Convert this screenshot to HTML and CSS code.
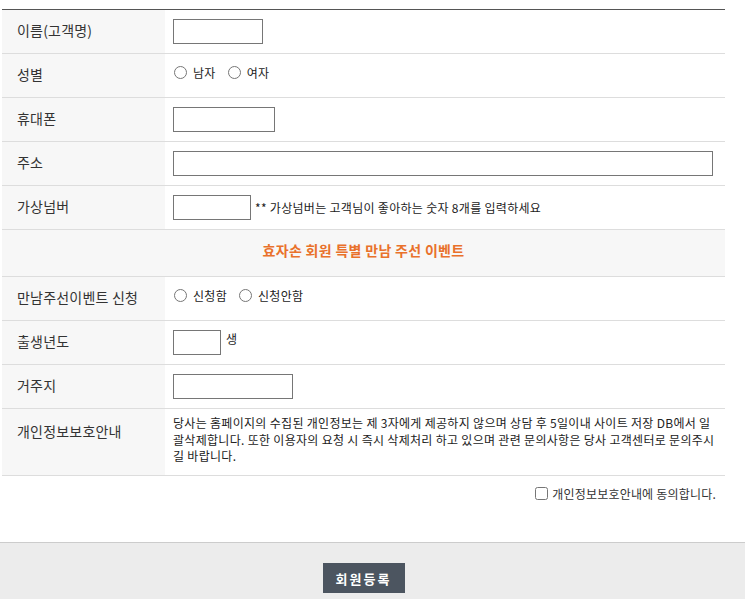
FILE: index.html
```html
<!DOCTYPE html>
<html>
	<head>
		<meta charset="utf-8">
		<title>회원등록</title>

		<link rel="stylesheet" href="styles.css">
	</head>
	<body>
		<form class="join">
			<table class="form-table">
				<tr>
					<th>이름(고객명)</th>
					<td><input type="text" class="inp w90"></td>
				</tr>
				<tr>
					<th>성별</th>
					<td>
						<label class="radio"><input type="radio" name="sex"> 남자</label>
						<label class="radio"><input type="radio" name="sex"> 여자</label>
					</td>
				</tr>
				<tr>
					<th>휴대폰</th>
					<td><input type="text" class="inp w102"></td>
				</tr>
				<tr>
					<th>주소</th>
					<td><input type="text" class="inp full"></td>
				</tr>
				<tr>
					<th>가상넘버</th>
					<td><input type="text" class="inp w78"> <span class="note">** 가상넘버는 고객님이 좋아하는 숫자 8개를 입력하세요</span></td>
				</tr>
				<tr>
					<td colspan="2" class="event">효자손 회원 특별 만남 주선 이벤트</td>
				</tr>
				<tr>
					<th>만남주선이벤트 신청</th>
					<td>
						<label class="radio"><input type="radio" name="event"> 신청함</label>
						<label class="radio"><input type="radio" name="event"> 신청안함</label>
					</td>
				</tr>
				<tr>
					<th>출생년도</th>
					<td><input type="text" class="inp w48"> <span class="unit">생</span></td>
				</tr>
				<tr>
					<th>거주지</th>
					<td><input type="text" class="inp w120"></td>
				</tr>
				<tr class="privacy">
					<th>개인정보보호안내</th>
					<td>당사는 홈페이지의 수집된 개인정보는 제 3자에게 제공하지 않으며 상담 후 5일이내 사이트 저장 DB에서 일괄삭제합니다. 또한 이용자의 요청 시 즉시 삭제처리 하고 있으며 관련 문의사항은 당사 고객센터로 문의주시길 바랍니다.</td>
				</tr>
			</table>

			<div class="agree">
				<label><input type="checkbox"> 개인정보보호안내에 동의합니다.</label>
			</div>

			<div class="btn-area">
				<button type="button" class="btn">회원등록</button>
			</div>
		</form>
	</body>
</html>
```

FILE: styles.css
```css
* {
	margin: 0;
	padding: 0;
	box-sizing: border-box;
}

body {
	font-family: "Noto Sans CJK KR", "Noto Sans", sans-serif;
	color: #333;
	background: #fff;
}

.join {
	padding-top: 9px;
}

.form-table {
	width: 723px;
	margin-left: 2px;
	border-collapse: collapse;
	border-top: 1px solid #555;
}

.form-table tr {
	height: 44px;
	border-bottom: 1px solid #ddd;
}

.form-table th {
	width: 163px;
	background: #f7f7f7;
	text-align: left;
	font-size: 14px;
	font-weight: normal;
	color: #333;
	padding: 0 0 3px 15px;
	letter-spacing: 0.2px;
}

.form-table td {
	padding: 0 0 0 8px;
	font-size: 12px;
	color: #222;
	letter-spacing: 0.3px;
}

.inp {
	height: 25px;
	border: 1px solid #767676;
	vertical-align: middle;
	font-size: 12px;
	padding: 0 3px;
}

.w48 { width: 48px; }
.w78 { width: 78px; }
.w90 { width: 90px; }
.w102 { width: 102px; }
.w120 { width: 120px; }
.full { width: 540px; }

.note {
	vertical-align: middle;
	font-size: 12px;
	margin-left: 1px;
}

.unit {
	vertical-align: 2px;
	margin-left: 2px;
}

.radio {
	display: inline-flex;
	align-items: center;
	margin-right: 8px;
	vertical-align: 5px;
}

.radio input {
	width: 13px;
	height: 13px;
	margin: 0 6px 0 1px;
}

.form-table .event {
	height: 47px;
	padding: 0 0 6px;
	background: #f7f7f7;
	text-align: center;
	color: #e9712b;
	font-weight: bold;
	font-size: 14px;
	letter-spacing: 0.3px;
}

.form-table .privacy {
	height: 67px;
}

.privacy th,
.privacy td {
	vertical-align: top;
}

.form-table .privacy th {
	padding-top: 12px;
}

.form-table .privacy td {
	padding: 6px 4px 8px 8px;
	line-height: 16.5px;
	letter-spacing: 0.3px;
}

.agree {
	width: 723px;
	margin-left: 2px;
	padding: 9px 9px 0 0;
	text-align: right;
	font-size: 12px;
	height: 66px;
}

.agree label {
	display: inline-flex;
	align-items: center;
	letter-spacing: 0.2px;
}

.agree input {
	width: 13px;
	height: 13px;
	margin-right: 4px;
}

.btn-area {
	border-top: 1px solid #ccc;
	background: #ececec;
	height: 57px;
	padding: 20px 18px 0 0;
	text-align: center;
}

.btn {
	width: 82px;
	height: 30px;
	border: 0;
	background: #4c5560;
	color: #fff;
	font-family: inherit;
	font-size: 13px;
	font-weight: bold;
	letter-spacing: 2px;
}
```
